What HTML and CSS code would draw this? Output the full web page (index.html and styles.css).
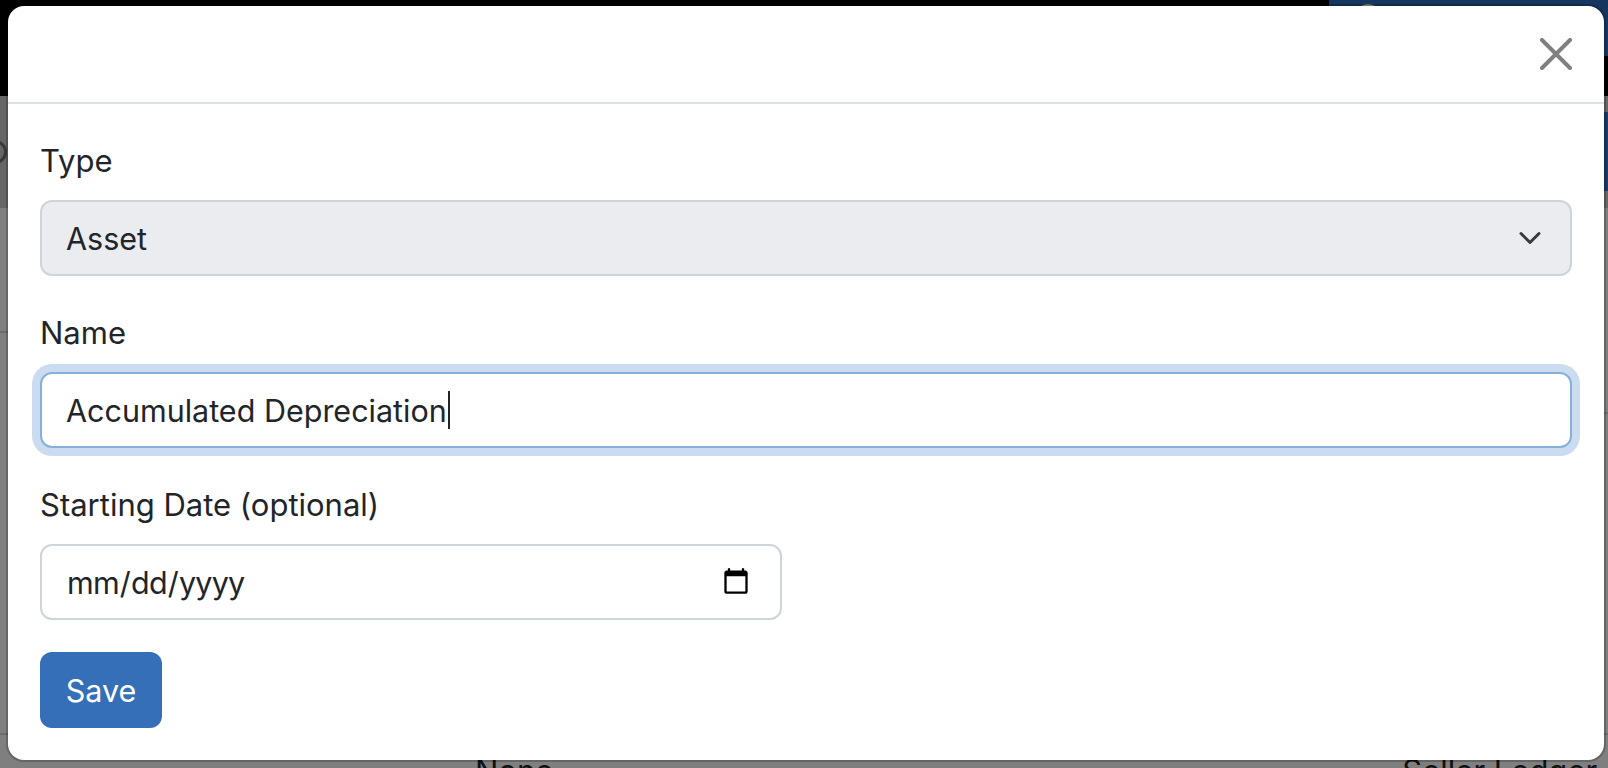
FILE: index.html
```html
<!DOCTYPE html>
<html lang="en">
<head>
    <meta charset="UTF-8">
    <meta name="viewport" content="width=device-width, initial-scale=1.0">
    <title>New Ledger</title>
    <link rel="stylesheet" href="styles.css">
</head>
<body>
    <!-- Page behind the modal -->
    <div class="page">
        <div class="topbar">
            <div class="account"><span class="avatar"></span></div>
        </div>
        <div class="subbar">
            <span class="logo"></span>
            <div class="action"></div>
        </div>
        <div class="lines">
            <div class="line-left"></div>
            <div class="line-right"></div>
        </div>
        <div class="table-row">
            <span class="cell-none">None</span>
            <span class="cell-seller">Seller Ledger</span>
        </div>
    </div>

    <!-- Modal -->
    <div class="modal">
        <div class="modal-header">
            <button class="close" type="button" aria-label="Close">
                <svg width="32" height="32" viewBox="0 0 32 32">
                    <path d="M2 2L30 30M30 2L2 30" stroke="#808080" stroke-width="4" stroke-linecap="round" fill="none"/>
                </svg>
            </button>
        </div>
        <form class="modal-body">
            <div class="field">
                <label class="label" for="type">Type</label>
                <select class="control select" id="type" disabled>
                    <option>Asset</option>
                </select>
            </div>
            <div class="field">
                <label class="label" for="name">Name</label>
                <div class="input-wrap">
                    <input class="control focused" id="name" type="text" value="Accumulated Depreciation">
                    <span class="caret"></span>
                </div>
            </div>
            <div class="field">
                <label class="label" for="date">Starting Date (optional)</label>
                <input class="control date" id="date" type="date">
            </div>
            <button class="save" type="button">Save</button>
        </form>
    </div>
</body>
</html>
```

FILE: styles.css
```css
* {
    box-sizing: border-box;
}
body {
    margin: 0;
    height: 768px;
    overflow: hidden;
    font-family: 'Inter', 'Liberation Sans', sans-serif;
    color: #212529;
}
.page {
    height: 768px;
    background: #7f7f7f;
    overflow: hidden;
}
.topbar {
    height: 96px;
    background: #000;
    display: flex;
    justify-content: flex-end;
}
.account {
    width: 279px;
    height: 56px;
    background: #17365f;
    padding: 4px 0 0 26px;
}
.avatar {
    display: block;
    width: 26px;
    height: 26px;
    border-radius: 50%;
    background: #8a8a84;
}
.subbar {
    height: 112px;
    background: #666;
    display: flex;
    justify-content: space-between;
    align-items: flex-start;
}
.logo {
    width: 24px;
    height: 24px;
    margin: 44px 0 0 -17px;
    border: 3px solid #3a3a3a;
    border-radius: 50%;
}
.action {
    width: 220px;
    height: 79px;
    margin-top: 16px;
    background: #1b3a66;
}
.lines {
    display: flex;
    justify-content: space-between;
    align-items: flex-start;
    height: 525px;
}
.line-left {
    width: 8px;
    height: 125px;
    border-bottom: 2px solid #6c6c6c;
}
.line-right {
    width: 4px;
    height: 206px;
    border-bottom: 2px solid #6c6c6c;
}
.table-row {
    display: flex;
    padding-top: 12px;
    padding-left: 475px;
    font-size: 31px;
    line-height: 48px;
    color: #111;
    border-top: 2px solid #6c6c6c;
}
.cell-seller {
    margin-left: 849px;
    white-space: nowrap;
}

/* Modal */
.modal {
    position: absolute;
    left: 8px;
    top: 6px;
    width: 1596px;
    height: 754px;
    background: #fff;
    border-radius: 16px;
    box-shadow: 0 0 0 2px rgba(0, 0, 0, 0.2);
}
.modal-header {
    height: 98px;
    border-bottom: 2px solid #dee2e6;
    display: flex;
    justify-content: flex-end;
    padding: 32px 32px 0 0;
}
.close {
    width: 32px;
    height: 32px;
    padding: 0;
    border: none;
    background: none;
}
.modal-body {
    padding: 32px;
    display: flex;
    flex-direction: column;
    align-items: flex-start;
}
.field {
    width: 100%;
    margin-bottom: 32px;
}
.label {
    display: block;
    font-size: 31px;
    line-height: 46px;
    padding-top: 2px;
    margin-bottom: 16px;
}
.control {
    display: block;
    width: 100%;
    height: 76px;
    padding: 12px 24px;
    font-family: inherit;
    font-size: 30.5px;
    color: #212529;
    background-color: #fff;
    border: 2px solid #ced4da;
    border-radius: 12px;
    outline: none;
}
.select {
    appearance: none;
    opacity: 1;
    background-color: #eaecf0;
    background-image: url("data:image/svg+xml,%3csvg xmlns='http://www.w3.org/2000/svg' viewBox='0 0 16 16'%3e%3cpath fill='none' stroke='%23343a40' stroke-linecap='round' stroke-linejoin='round' stroke-width='2' d='M2 5l6 6 6-6'/%3e%3c/svg%3e");
    background-repeat: no-repeat;
    background-position: right 24px center;
    background-size: 32px 24px;
}
.input-wrap {
    position: relative;
}
.focused {
    border-color: #86b0dc;
    box-shadow: 0 0 0 8px #ccdcf0;
    caret-color: transparent;
}
.caret {
    position: absolute;
    left: 408px;
    top: 19px;
    width: 2px;
    height: 38px;
    background: #212529;
}
.date {
    width: 742px;
    letter-spacing: -0.8px;
}
.date::-webkit-calendar-picker-indicator {
    margin-right: 3px;
}
.save {
    width: 122px;
    height: 76px;
    padding: 0;
    font-family: inherit;
    font-size: 30.5px;
    color: #fff;
    background: #346fb8;
    border: none;
    border-radius: 12px;
}
```
